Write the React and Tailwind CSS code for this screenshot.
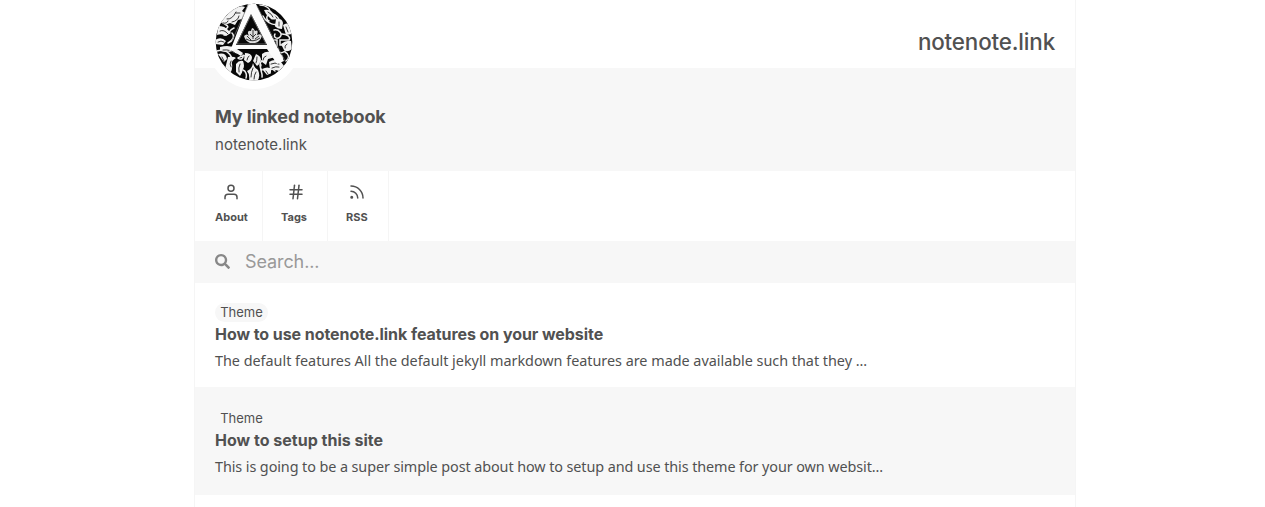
import { Hash, Rss } from "lucide-react";
import { FaSearch } from "react-icons/fa";

const posts = [
  {
    title: "How to use notenote.link features on your website",
    text: "The default features All the default jekyll markdown features are made available such that they ...",
    size: "h-[104px] bg-white",
    titleStyle: "tracking-[-0.065px]",
    textStyle: "tracking-[-0.018px]",
  },
  {
    title: "How to setup this site",
    text: "This is going to be a super simple post about how to setup and use this theme for your own websit...",
    size: "h-[108px] bg-[#f7f7f7]",
    titleStyle: "tracking-[0.01px]",
    textStyle: "tracking-[-0.09px]",
  },
];

function Monogram() {
  return (
    <svg viewBox="0 0 78 78" className="size-[78px]">
      <defs>
        <clipPath id="disc"><circle cx="39" cy="39" r="38.3" /></clipPath>
      </defs>
      <g clipPath="url(#disc)">
        <rect width="78" height="78" fill="#080808" />
        <g fill="#f2f2f2">
          <path d="M9 15q4-3 5-7l6-3q6-3 10-1l-3 4 3 2-3 6-4 1-3 5-5-2-5 2-5-3zM3 24q5-2 9 2l4 4-5 3q-4-3-9-1zM0 37q6-4 11 1l-3 4-8-1zM5 44q10-3 17 2l6 4-2 3q-9-6-15-4l-6-1zM3 51q8-2 9 5l-3 3zM13 54q6-1 8 1-5 3-4 6 1 5-2 10l-5-5zM21 61q3-4 7-3 2 5 0 8-1 5-3 7l-4-4zM30 50q6 0 7 4 0 4-4 6l-4-3zM41 51q5 2 5 6-1 4-4 6l-4-5zM38 60q1 5 5 7 3 7-1 11h-8q1-7-2-10 5-2 6-8zM47 51q5-4 10-1l5 4q-6 1-9 2l-2 6-4-3zM54 59q6-4 12 0l3 4-5 5q-5-2-9-1zM47 66q6-3 9 0 1 5-4 6zM66 41q5-4 10-3l1 8q-5 4-8 1zM49 7q6-1 9 3l4 6q-5 1-6 0l-5-5zM61 16q6-1 7 4l-1 6q-5 0-7-3zM68 22q4-3 6 0l3 9-6 1z" />
        </g>
        <g fill="none" stroke="#eeeeee" strokeWidth="1.5" strokeLinecap="round">
          <path d="M45 2c6 0 11 4 10 8M54 18c-4-2-2-9 4-7 7 3 9 11 3 12M48 13c4 8 13 11 18 6M59 27c5-1 9 4 6 7s-7 0-5-3M67 31c5 0 9 3 7 6h-9v5h5M57 37h5v6M5 19c-2 4 0 7 4 7s5-3 2-4M19 25c-6 2-5 8-10 7M13 40c5-2 7-7 4-10M2 48c8-3 14 3 15 8M28 52c1 4-3 5-5 3M23 55c6-4 9-2 12 1M46 62c-2 4 2 8 1 12M50 56c-6 2-6 8-3 11M58 53c6-3 11 0 9 3M60 68c-4-4-6-1-5 2M28 67c3 1 4 5 3 8M70 49c4 2 5 6 1 9M63 46c0 4 3 5 7 2" />
        </g>
        <g fill="none" stroke="#202020" strokeWidth=".9" strokeLinecap="round">
          <path d="M12 16q5 1 9-7M17 19q6-1 7-6M21 10l4 0M8 20q4 1 5-2M5 28q4-2 8 3M3 39q3-2 6 0M8 47q8-1 13 4M7 54l2 4M16 58q-2 3 0 6M25 61q-2 4-1 8M34 53q-2 2-2 4M38 65q-2 4-2 9M41 69q-2 3-2 7M42 54q0 4-1 6M51 53q-3 1-3 4M56 61q4-2 8 0M57 65q4-2 7-1M51 68l2 3M72 41q-3 2-2 4M53 9q4 2 5 5M64 19v4M71 24l2 5" />
        </g>
        <path d="M37 13L22 42h29z" fill="#080808" />
        <path d="M29 33q3-3 5 0-3-6 2-5 1-6 4 0 4-2 2 4 4-2 5 1-2 6-7 7h-5q-5-2-6-7z" fill="#dedede" />
        <path d="M32 33l4 4M38 27v9M44 33l-4 3M31 36q7 4 14-1M35 31l3 3 3-3" fill="none" stroke="#222" strokeWidth=".9" />
        <path d="M33 1h8l28 57-7 3-10-15H23q-7 0-10 4l4-7zM36 11L21 42h31z" fill="#fcfcfc" fillRule="evenodd" />
        <path d="M33 2L17 38M42 3l28 55" fill="none" stroke="#777" strokeWidth=".7" />
        <path d="M36 12L22 41h29z" fill="none" stroke="#777" strokeWidth=".8" />
      </g>
    </svg>
  );
}

function UserIcon() {
  return (
    <svg viewBox="0 0 24 24" fill="none" stroke="currentColor" strokeWidth="2" strokeLinecap="round" strokeLinejoin="round" className="ml-[7px] size-[18px]">
      <path d="M20 21v-2a4 4 0 0 0-4-4H8a4 4 0 0 0-4 4v2" />
      <circle cx="12" cy="7" r="4" />
    </svg>
  );
}

export default function App() {
  return (
    <div className="h-[507px] overflow-hidden bg-white font-[Inter,sans-serif] text-[#515151]">
      <main className="ml-[194px] h-[507px] w-[882px] border-x border-[#f5f5f5]">
        <header className="flex h-[68px] items-start justify-between px-5">
          <div className="relative z-10 -ml-2 -mt-[5px] flex size-[94px] shrink-0 items-center justify-center rounded-full bg-white">
            <Monogram />
          </div>
          <div className="mt-[25px] text-[22.4px] leading-[34px] font-medium tracking-[-0.16px]">notenote.link</div>
        </header>
        <section className="h-[103px] bg-[#f7f7f7] px-5 pt-[35px]">
          <h1 className="text-[18px] leading-[27px] font-bold tracking-[-0.11px]">My linked notebook</h1>
          <p className="mt-[3px] text-[15px] leading-6 tracking-[0.04px]">notenote.link</p>
        </section>
        <nav className="flex h-[70px] text-[11px] leading-4 font-bold">
          <a className="flex w-[68px] flex-col border-r border-[#f5f5f5] pl-5 pt-3">
            <UserIcon />
            <span className="mt-2">About</span>
          </a>
          <a className="flex w-[65px] flex-col border-r border-[#f5f5f5] pl-[18px] pt-3">
            <Hash size={18} strokeWidth={2} className="ml-[6px]" />
            <span className="mt-2">Tags</span>
          </a>
          <a className="flex w-[61px] flex-col border-r border-[#f5f5f5] pl-[18px] pt-3">
            <Rss size={18} strokeWidth={2} className="ml-[2px]" />
            <span className="mt-2">RSS</span>
          </a>
        </nav>
        <div className="flex h-[42px] items-center gap-[15px] bg-[#f7f7f7] px-5 pb-px">
          <FaSearch size={15} color="#888888" />
          <span className="text-[18px] leading-[27px] tracking-[-0.1px] text-[#999999]">Search...</span>
        </div>
        {posts.map((post) => (
          <article key={post.title} className={`${post.size} px-5 pt-5 last:pt-[22px]`}>
            <div className="flex h-[19px] w-[53px] items-center justify-center rounded-full bg-[#f7f7f7] text-[13px]">Theme</div>
            <h2 className={`text-[16px] leading-6 font-bold ${post.titleStyle}`}>{post.title}</h2>
            <p className={`mt-[3px] font-['Noto_Sans',sans-serif] text-[14.4px] leading-6 whitespace-nowrap ${post.textStyle}`}>{post.text}</p>
          </article>
        ))}
      </main>
    </div>
  );
}
